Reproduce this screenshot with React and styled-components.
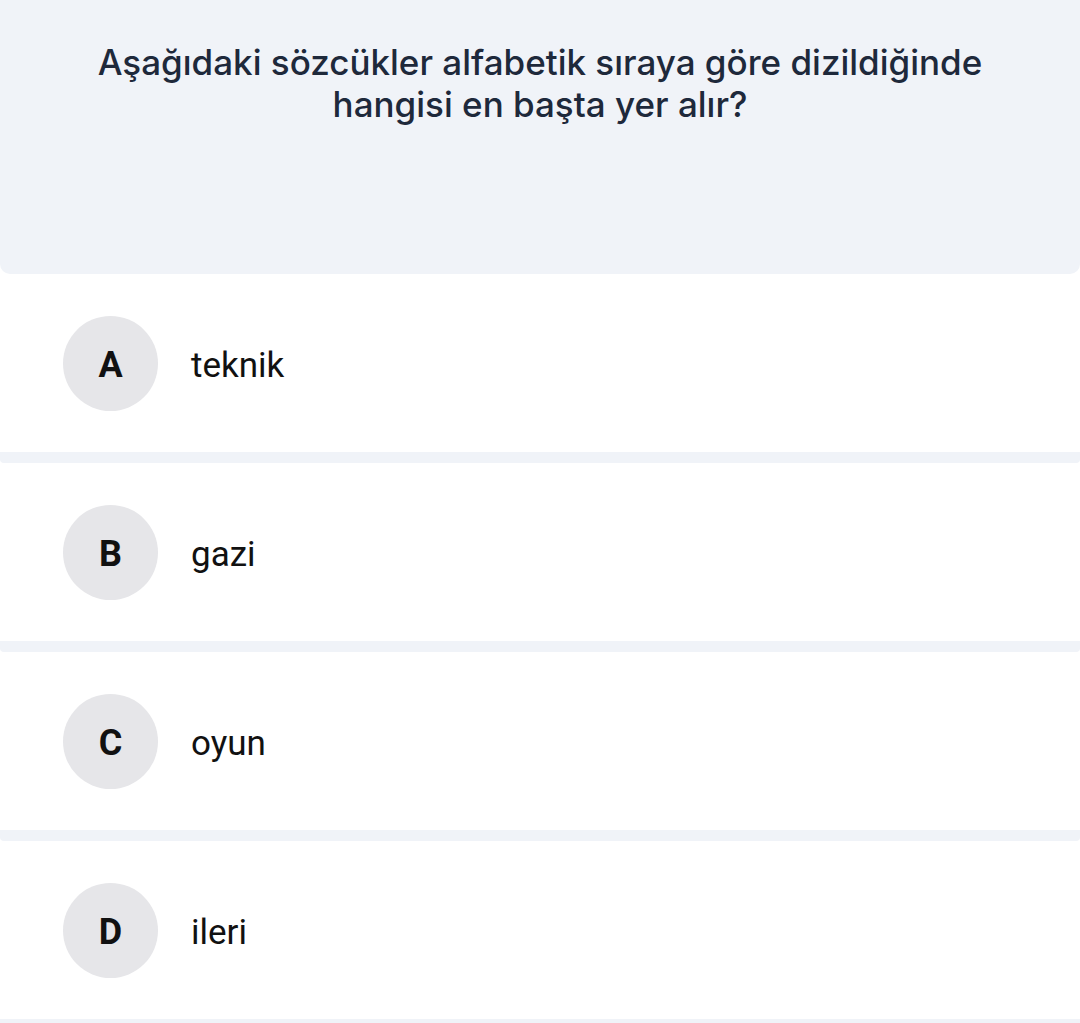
import React from 'react'
import styled, { createGlobalStyle } from 'styled-components'

const GlobalStyle = createGlobalStyle`
    * { box-sizing: border-box; }
    body {
        margin: 0;
        background: #ffffff;
        font-family: Inter, "Noto Sans", sans-serif;
    }
`
const Page = styled.div`
    width: 1080px;
    display: flex;
    flex-direction: column;
`
const Question = styled.div`
    height: 274px;
    background-color: #f0f3f8;
    border-radius: 0 0 10px 10px;
    padding-top: 41px;
    padding-left: 40px;
    padding-right: 40px;
`
const QuestionText = styled.h1`
    margin: 0;
    font-family: Inter, sans-serif;
    font-weight: 450;
    font-size: 35px;
    line-height: 42px;
    color: #1e293b;
    text-align: center;
`
const Option = styled.div`
    height: 178px;
    display: flex;
    align-items: center;
    padding-left: 63px;
    gap: 33px;
`
const Badge = styled.div`
    width: 95px;
    height: 95px;
    border-radius: 50%;
    background-color: #e6e6e9;
    display: flex;
    align-items: center;
    justify-content: center;
    font-family: Roboto, "Liberation Sans", sans-serif;
    font-weight: 700;
    font-size: 36px;
    color: #111111;
    padding-top: 3px;
`
const Label = styled.span`
    font-family: Roboto, "Liberation Sans", sans-serif;
    font-size: 35px;
    color: #111111;
    padding-top: 5px;
`
const Divider = styled.div`
    height: 11px;
    background-color: #f0f3f8;
    border-radius: 0 0 4px 4px;
`

const options = [
    { key: 'A', text: 'teknik' },
    { key: 'B', text: 'gazi' },
    { key: 'C', text: 'oyun' },
    { key: 'D', text: 'ileri' },
]

const App = () => {
    return (
        <Page>
            <GlobalStyle />
            <Question>
                <QuestionText>
                    Aşağıdaki sözcükler alfabetik sıraya göre dizildiğinde
                    <br />
                    hangisi en başta yer alır?
                </QuestionText>
            </Question>
            {options.map((o) => (
                <React.Fragment key={o.key}>
                    <Option>
                        <Badge>{o.key}</Badge>
                        <Label>{o.text}</Label>
                    </Option>
                    <Divider />
                </React.Fragment>
            ))}
        </Page>
    )
}

export default App
